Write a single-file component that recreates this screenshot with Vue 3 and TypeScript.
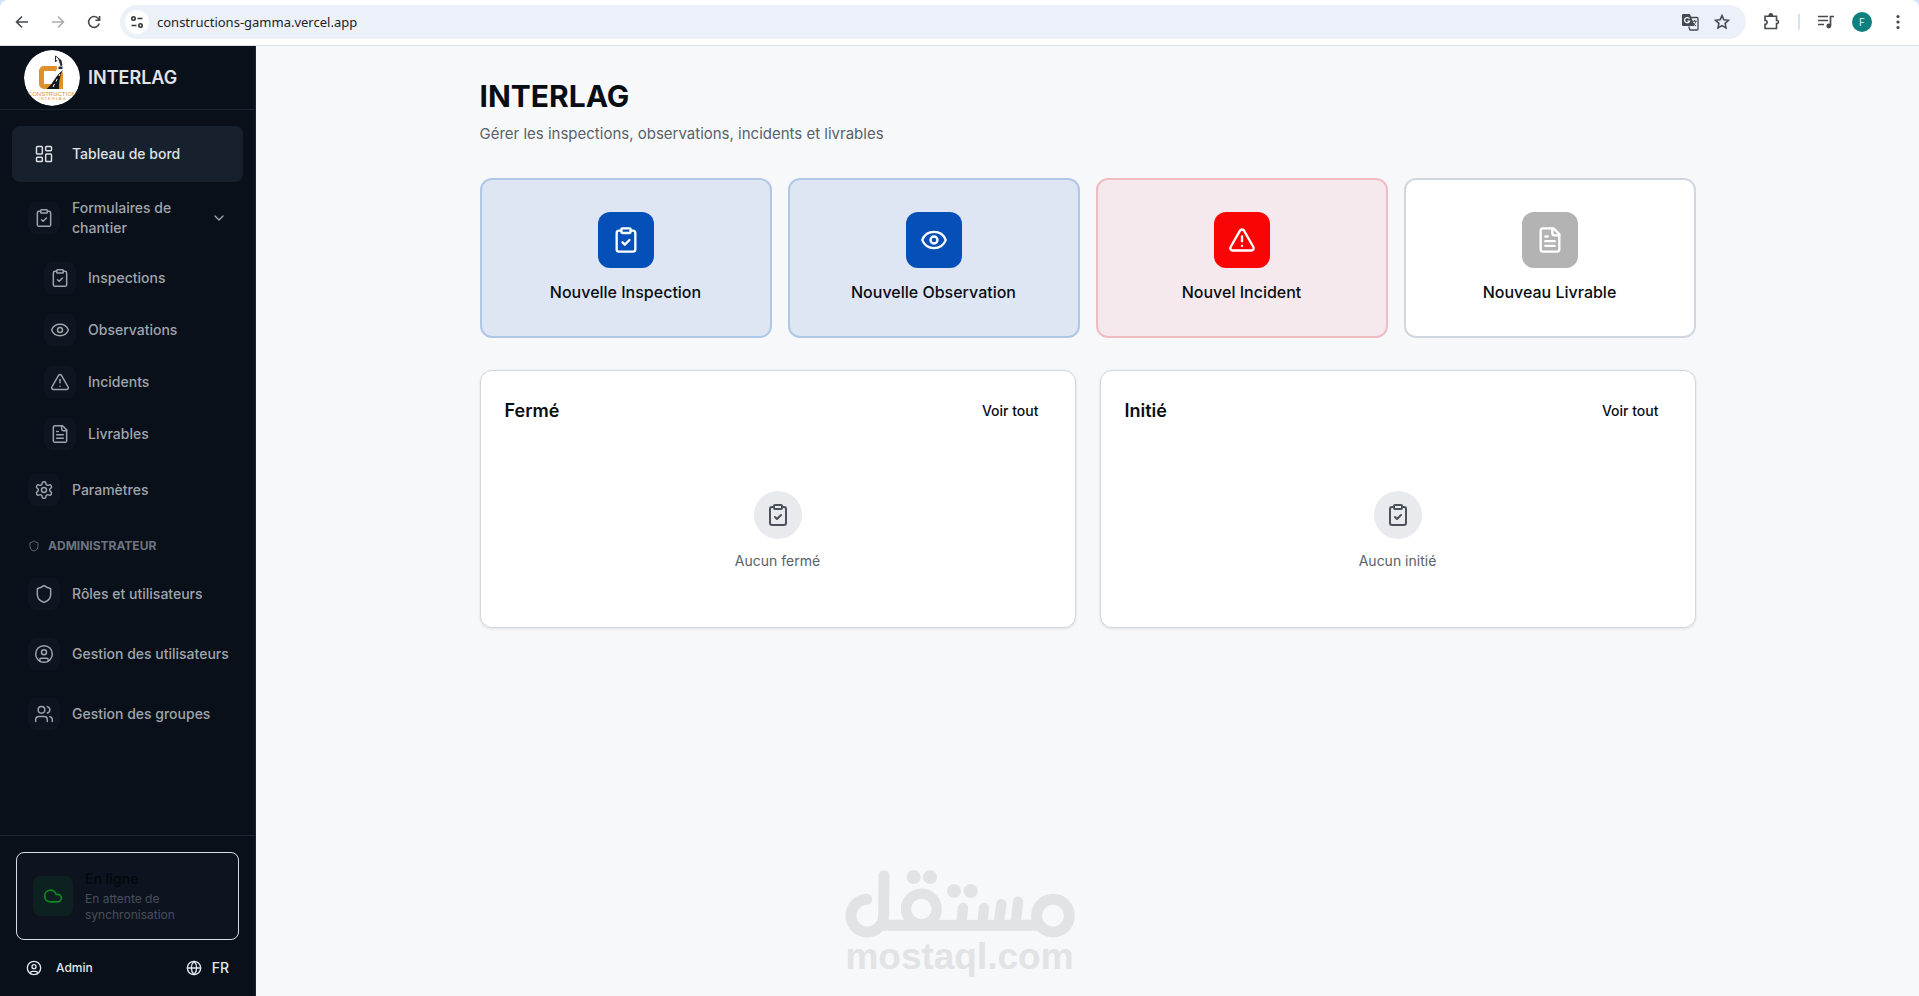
<script setup lang="ts">
import { ref } from 'vue'

type IconName =
  | 'dashboard' | 'clipboard' | 'eye' | 'alert' | 'file' | 'settings'
  | 'shield' | 'user' | 'users' | 'cloud' | 'globe' | 'chevron'

const icons: Record<IconName, string> = {
  dashboard:
    '<rect x="3" y="3" width="7" height="9" rx="1"/><rect x="14" y="3" width="7" height="5" rx="1"/><rect x="14" y="12" width="7" height="9" rx="1"/><rect x="3" y="16" width="7" height="5" rx="1"/>',
  clipboard:
    '<rect x="8" y="2" width="8" height="4" rx="1"/><path d="M16 4h2a2 2 0 0 1 2 2v14a2 2 0 0 1-2 2H6a2 2 0 0 1-2-2V6a2 2 0 0 1 2-2h2"/><path d="m9 14 2 2 4-4"/>',
  eye:
    '<path d="M2.062 12.348a1 1 0 0 1 0-.696 10.75 10.75 0 0 1 19.876 0 1 1 0 0 1 0 .696 10.75 10.75 0 0 1-19.876 0"/><circle cx="12" cy="12" r="3"/>',
  alert:
    '<path d="m21.73 18-8-14a2 2 0 0 0-3.48 0l-8 14A2 2 0 0 0 4 21h16a2 2 0 0 0 1.73-3"/><path d="M12 9v4"/><path d="M12 17h.01"/>',
  file:
    '<path d="M15 2H6a2 2 0 0 0-2 2v16a2 2 0 0 0 2 2h12a2 2 0 0 0 2-2V7Z"/><path d="M14 2v4a2 2 0 0 0 2 2h4"/><path d="M10 9H8"/><path d="M16 13H8"/><path d="M16 17H8"/>',
  settings:
    '<path d="M12.22 2h-.44a2 2 0 0 0-2 2v.18a2 2 0 0 1-1 1.73l-.43.25a2 2 0 0 1-2 0l-.15-.08a2 2 0 0 0-2.73.73l-.22.38a2 2 0 0 0 .73 2.73l.15.1a2 2 0 0 1 1 1.72v.51a2 2 0 0 1-1 1.74l-.15.09a2 2 0 0 0-.73 2.73l.22.38a2 2 0 0 0 2.73.73l.15-.08a2 2 0 0 1 2 0l.43.25a2 2 0 0 1 1 1.73V20a2 2 0 0 0 2 2h.44a2 2 0 0 0 2-2v-.18a2 2 0 0 1 1-1.73l.43-.25a2 2 0 0 1 2 0l.15.08a2 2 0 0 0 2.73-.73l.22-.39a2 2 0 0 0-.73-2.73l-.15-.08a2 2 0 0 1-1-1.74v-.5a2 2 0 0 1 1-1.74l.15-.09a2 2 0 0 0 .73-2.73l-.22-.38a2 2 0 0 0-2.73-.73l-.15.08a2 2 0 0 1-2 0l-.43-.25a2 2 0 0 1-1-1.73V4a2 2 0 0 0-2-2z"/><circle cx="12" cy="12" r="3"/>',
  shield:
    '<path d="M20 13c0 5-3.5 7.5-7.66 8.95a1 1 0 0 1-.67-.01C7.5 20.5 4 18 4 13V6a1 1 0 0 1 1-1c2 0 4.5-1.2 6.24-2.72a1.17 1.17 0 0 1 1.52 0C14.51 3.81 17 5 19 5a1 1 0 0 1 1 1z"/>',
  user:
    '<circle cx="12" cy="12" r="10"/><circle cx="12" cy="10" r="3"/><path d="M7 20.662V19a2 2 0 0 1 2-2h6a2 2 0 0 1 2 2v1.662"/>',
  users:
    '<path d="M16 21v-2a4 4 0 0 0-4-4H6a4 4 0 0 0-4 4v2"/><circle cx="9" cy="7" r="4"/><path d="M22 21v-2a4 4 0 0 0-3-3.87"/><path d="M16 3.13a4 4 0 0 1 0 7.75"/>',
  cloud: '<path d="M17.5 19H9a7 7 0 1 1 6.71-9h1.79a4.5 4.5 0 1 1 0 9Z"/>',
  globe:
    '<circle cx="12" cy="12" r="10"/><path d="M12 2a14.5 14.5 0 0 0 0 20 14.5 14.5 0 0 0 0-20"/><path d="M2 12h20"/>',
  chevron: '<path d="m6 9 6 6 6-6"/>',
}

interface NavEntry { label: string; icon: IconName }

const formEntries: NavEntry[] = [
  { label: 'Inspections', icon: 'clipboard' },
  { label: 'Observations', icon: 'eye' },
  { label: 'Incidents', icon: 'alert' },
  { label: 'Livrables', icon: 'file' },
]

const adminEntries: NavEntry[] = [
  { label: 'Rôles et utilisateurs', icon: 'shield' },
  { label: 'Gestion des utilisateurs', icon: 'user' },
  { label: 'Gestion des groupes', icon: 'users' },
]

const actions: { label: string; icon: IconName; tone: string }[] = [
  { label: 'Nouvelle Inspection', icon: 'clipboard', tone: 'blue' },
  { label: 'Nouvelle Observation', icon: 'eye', tone: 'blue' },
  { label: 'Nouvel Incident', icon: 'alert', tone: 'red' },
  { label: 'Nouveau Livrable', icon: 'file', tone: 'plain' },
]

const panels = [
  { title: 'Fermé', empty: 'Aucun fermé' },
  { title: 'Initié', empty: 'Aucun initié' },
]

const formsOpen = ref(true)
const address = ref('constructions-gamma.vercel.app')
</script>

<template>
  <div class="window">
    <header class="toolbar">
      <div class="nav-buttons">
        <button class="tool" type="button" aria-label="Précédent">
          <svg width="16" height="16" viewBox="0 0 16 16" class="line"><path d="M14 8H3M8 2.5 2.5 8 8 13.5" /></svg>
        </button>
        <button class="tool faded" type="button" aria-label="Suivant">
          <svg width="16" height="16" viewBox="0 0 16 16" class="line"><path d="M2 8h11M8 2.5 13.5 8 8 13.5" /></svg>
        </button>
        <button class="tool" type="button" aria-label="Actualiser">
          <svg width="16" height="16" viewBox="0 0 16 16" class="line"><path d="M13.2 9.5A5.4 5.4 0 1 1 12 4.3L13.4 5.8M13.6 2v4.2H9.4" /></svg>
        </button>
      </div>
      <div class="omnibox">
        <button class="site-info" type="button" aria-label="Informations sur le site">
          <svg width="14" height="14" viewBox="0 0 14 14" class="line"><circle cx="3.5" cy="3.5" r="1.7" /><path d="M7.5 3.5h5M1.5 10.5h5" /><circle cx="10.5" cy="10.5" r="1.7" /></svg>
        </button>
        <input v-model="address" class="address" type="text" aria-label="Adresse" />
        <button class="tool" type="button" aria-label="Traduire">
          <svg width="18" height="18" viewBox="0 0 18 18">
            <path d="M2 1h7l4.5 12H2a1 1 0 0 1-1-1V2a1 1 0 0 1 1-1z" fill="#454a50" />
            <path d="M9.7 4.5H16a1 1 0 0 1 1 1V16a1 1 0 0 1-1 1H9l-1.3-3.5" fill="none" stroke="#454a50" stroke-width="1.3" />
            <path d="M8.4 5.8A2.6 2.6 0 1 0 8.6 8H6.4" fill="none" stroke="#fff" stroke-width="1.2" />
            <path d="M11 8.2h4.8M13.4 7v1.2M14.8 8.2c-.4 2-1.6 3.6-3 4.6M12 9.8c.7 1.3 1.7 2.4 3 3.2" fill="none" stroke="#454a50" />
          </svg>
        </button>
        <button class="tool" type="button" aria-label="Ajouter aux favoris">
          <svg width="16" height="16" viewBox="0 0 16 16" class="line"><path d="m8 1.6 1.9 4.2 4.6.5-3.4 3.1.9 4.5L8 11.6l-4 2.3.9-4.5-3.400-3.100 4.600-.5z" /></svg>
        </button>
      </div>
      <div class="tools">
        <button class="tool" type="button" aria-label="Extensions">
          <svg width="18" height="18" viewBox="0 0 18 18" class="line"><path d="M2 3.200h11.500v4.200c2.600-.5 2.600 3.700 0 3.200v4.900H2v-4.200c2.800.2 2.800-4.200 0-4z" /><path d="M6.200 2.500a1.600 1.600 0 0 1 3.200 0z" fill="#454a50" /></svg>
        </button>
        <span class="separator"></span>
        <button class="tool" type="button" aria-label="Commandes multimédias">
          <svg width="18" height="16" viewBox="0 0 18 16"><path d="M1 2.500h10M1 6.500h10M1 10.500h6M13.500 12V2.500H17" fill="none" stroke="#454a50" stroke-width="1.700" /><circle cx="11.800" cy="12" r="2.400" fill="#454a50" /></svg>
        </button>
        <button class="profile" type="button" aria-label="Profil">F</button>
        <button class="tool" type="button" aria-label="Menu">
          <svg width="16" height="16" viewBox="0 0 16 16" fill="#454a50"><circle cx="8" cy="2.500" r="1.600" /><circle cx="8" cy="8" r="1.600" /><circle cx="8" cy="13.500" r="1.600" /></svg>
        </button>
      </div>
    </header>

    <div class="app">
      <aside class="sidebar">
        <div class="brand">
          <svg width="56" height="56" viewBox="0 0 56 56" role="img" aria-label="Construction Interlag">
            <defs><clipPath id="brand-disc"><circle cx="28" cy="28" r="28" /></clipPath></defs>
            <g clip-path="url(#brand-disc)">
              <circle cx="28" cy="28" r="28" fill="#fff" />
              <path d="M31 18.500H20a2.500 2.500 0 0 0-2.500 2.500v13a2.500 2.500 0 0 0 2.500 2.500h7" fill="none" stroke="#dd902b" stroke-width="5" />
              <path d="M31 16h1.500l1 2.500L31 22zM34 28l5-6v17h-5z" fill="#dd902b" />
              <path d="M22.500 39c4-3 6-7 9-11 2-3 4-5 7.500-8-2.500 5-4 9-4 19z" fill="#15181c" />
              <path d="M29 37l1.500-3M32 31.500l1.200-2.500M35 26l1-2" stroke="#fff" stroke-width="1" />
              <path d="M31.500 6v6l1.500-2M31.500 6l5.500 4.500.5 4.500" fill="none" stroke="#26303a" stroke-width="1" />
              <path d="M34 8l3 2 1.500 5-1 1h-1zM34.500 16.500h4v2.500h-4z" fill="#26303a" />
              <text x="28" y="46" text-anchor="middle" class="logo-line">CONSTRUCTION</text>
              <text x="28" y="50" text-anchor="middle" class="logo-sub">I N T E R L A G</text>
            </g>
          </svg>
          <span class="brand-name">INTERLAG</span>
        </div>

        <nav class="nav" aria-label="Navigation principale">
          <a class="item active" href="#tableau">
            <span class="chip"><svg class="icon" viewBox="0 0 24 24" v-html="icons.dashboard" /></span>
            <span>Tableau de bord</span>
          </a>
          <button class="item" type="button" :aria-expanded="formsOpen" @click="formsOpen = !formsOpen">
            <span class="chip"><svg class="icon" viewBox="0 0 24 24" v-html="icons.clipboard" /></span>
            <span class="grow">Formulaires de chantier</span>
            <svg class="icon small" viewBox="0 0 24 24" v-html="icons.chevron" />
          </button>
          <div v-if="formsOpen" class="subnav">
            <a v-for="entry in formEntries" :key="entry.label" class="item" href="#formulaires">
              <span class="chip"><svg class="icon" viewBox="0 0 24 24" v-html="icons[entry.icon]" /></span>
              <span>{{ entry.label }}</span>
            </a>
          </div>
          <a class="item" href="#parametres">
            <span class="chip"><svg class="icon" viewBox="0 0 24 24" v-html="icons.settings" /></span>
            <span>Paramètres</span>
          </a>
          <h2 class="section">
            <svg class="icon tiny" viewBox="0 0 24 24" v-html="icons.shield" />
            <span>ADMINISTRATEUR</span>
          </h2>
          <a v-for="entry in adminEntries" :key="entry.label" class="item" href="#admin">
            <span class="chip"><svg class="icon" viewBox="0 0 24 24" v-html="icons[entry.icon]" /></span>
            <span>{{ entry.label }}</span>
          </a>
        </nav>

        <div class="foot">
          <div class="status">
            <span class="status-icon"><svg class="icon cloud" viewBox="0 0 24 24" v-html="icons.cloud" /></span>
            <div>
              <p class="status-title">En ligne</p>
              <p class="status-text">En attente de synchronisation</p>
            </div>
          </div>
          <div class="account">
            <button class="account-button user" type="button">
              <svg class="icon small" viewBox="0 0 24 24" v-html="icons.user" />
              <span>Admin</span>
            </button>
            <button class="account-button lang" type="button">
              <svg class="icon small" viewBox="0 0 24 24" v-html="icons.globe" />
              <span>FR</span>
            </button>
          </div>
        </div>
      </aside>

      <main class="main">
        <div class="container">
          <h1>INTERLAG</h1>
          <p class="lead">Gérer les inspections, observations, incidents et livrables</p>

          <div class="actions">
            <button v-for="action in actions" :key="action.label" class="action" :class="action.tone" type="button">
              <span class="action-icon"><svg class="icon large" viewBox="0 0 24 24" v-html="icons[action.icon]" /></span>
              <span>{{ action.label }}</span>
            </button>
          </div>

          <div class="panels">
            <section v-for="panel in panels" :key="panel.title" class="panel">
              <div class="panel-head">
                <h2>{{ panel.title }}</h2>
                <button class="see-all" type="button">Voir tout</button>
              </div>
              <div class="empty">
                <span class="empty-icon"><svg class="icon medium" viewBox="0 0 24 24" v-html="icons.clipboard" /></span>
                <p>{{ panel.empty }}</p>
              </div>
            </section>
          </div>
        </div>
      </main>
    </div>

    <div class="watermark">
      <svg width="230" height="68" viewBox="72 60 690 204" fill="none" stroke="#e2e3e5" stroke-linecap="round" role="img" aria-label="مستقل">
        <path d="M137 148A49 49 0 1 0 188 197L189 77" stroke-width="33" />
        <path d="M186 226H655" stroke-width="33" stroke-linecap="butt" />
        <circle cx="301" cy="177" r="46" stroke-width="31" />
        <circle cx="696" cy="197" r="49" stroke-width="33" />
        <path d="M426 174 421 222M489 174 484 222M541 162 533 222M591 155 584 222" stroke-width="31" />
        <g fill="#e2e3e5" stroke="none">
          <circle cx="278" cy="81" r="21" /><circle cx="327" cy="81" r="21" />
          <circle cx="399" cy="123" r="21" /><circle cx="449" cy="123" r="21" />
        </g>
      </svg>
      <span>mostaql.com</span>
    </div>
  </div>
</template>

<style>
body {
  margin: 0;
  background: #f7f8fa;
}
</style>

<style scoped>
* {
  box-sizing: border-box;
}

.window {
  position: relative;
  display: flex;
  flex-direction: column;
  min-height: 100vh;
  background: #d3e3fd;
  font-family: Inter, "Liberation Sans", sans-serif;
  font-size: 14px;
  line-height: 20px;
  color: #090d14;
}

h1, h2, p {
  margin: 0;
}

button, input {
  font: inherit;
  color: inherit;
  padding: 0;
  border: 0;
  background: none;
}

a {
  color: inherit;
  text-decoration: none;
}

.icon {
  flex: none;
  width: 20px;
  height: 20px;
  fill: none;
  stroke: currentColor;
  stroke-width: 1.75;
  stroke-linecap: round;
  stroke-linejoin: round;
}
.icon.tiny { width: 12px; height: 12px; }
.icon.small { width: 16px; height: 16px; stroke-width: 2; }
.icon.cloud { stroke-width: 2; }
.icon.medium { width: 24px; height: 24px; stroke-width: 2; }
.icon.large { width: 28px; height: 28px; stroke-width: 2; }

/* Browser toolbar */
.toolbar {
  display: flex;
  align-items: center;
  height: 46px;
  padding: 0 11px 2px 12px;
  border-bottom: 1px solid #dfe1e4;
  border-radius: 8px 8px 0 0;
  background: #fff;
}
.nav-buttons {
  display: flex;
  gap: 16px;
  margin-right: 16px;
}
.tool {
  display: grid;
  place-items: center;
  width: 20px;
  height: 20px;
  color: #454a50;
}
.faded { color: #a9acb0; }
.line {
  fill: none;
  stroke: currentColor;
  stroke-width: 1.6;
}
.omnibox {
  display: flex;
  flex: 1;
  align-items: center;
  gap: 12px;
  height: 34px;
  padding: 0 14px 0 5px;
  border-radius: 17px;
  background: #ecf0f9;
}
.site-info {
  display: grid;
  place-items: center;
  width: 24px;
  height: 24px;
  border-radius: 50%;
  background: #fff;
  color: #30353b;
}
.address {
  flex: 1;
  margin-left: -4px;
  font-family: "Noto Sans", "Open Sans", sans-serif;
  font-size: 13px;
  color: #1f2226;
  outline: none;
}
.tools {
  display: flex;
  align-items: center;
  gap: 16px;
  margin-left: 16px;
}
.separator {
  width: 2px;
  height: 16px;
  background: #d5e4f2;
}
.profile {
  width: 20px;
  height: 20px;
  border-radius: 50%;
  background: #0f8080;
  color: #e3f3f3;
  font-size: 10px;
}

/* Sidebar */
.app {
  display: flex;
  flex: 1;
}
.sidebar {
  display: flex;
  flex-direction: column;
  flex: none;
  width: 256px;
  border-right: 1px solid #1d2733;
  background: #09101a;
  color: #a0a5ab;
  font-weight: 500;
}
.brand {
  display: flex;
  align-items: center;
  gap: 8px;
  height: 64px;
  padding: 0 24px;
  border-bottom: 1px solid #1d2733;
}
.logo-line {
  font: 400 6px "Liberation Sans", sans-serif;
  fill: #dd902b;
}
.logo-sub {
  font: 400 4px "Liberation Sans", sans-serif;
  fill: #dd902b;
}
.brand-name {
  color: #e1e5e9;
  font-size: 18px;
  font-weight: 600;
}
.nav {
  display: flex;
  flex: 1;
  flex-direction: column;
  gap: 4px;
  padding: 16px 12px;
}
.item {
  display: flex;
  align-items: center;
  gap: 12px;
  padding: 12px 16px;
  border-radius: 8px;
  text-align: left;
  white-space: nowrap;
}
.item.active {
  background: #17212d;
  color: #dfe2e5;
}
.chip {
  display: grid;
  flex: none;
  place-items: center;
  width: 32px;
  height: 32px;
  border-radius: 8px;
  background: #0e1520;
}
.active .chip { background: none; }
.grow {
  flex: 1;
  white-space: normal;
}
.subnav {
  display: flex;
  flex-direction: column;
  gap: 4px;
  padding-left: 16px;
}
.subnav .item {
  padding: 8px 16px;
}
.section {
  display: flex;
  align-items: center;
  gap: 8px;
  padding: 16px 16px 8px;
  color: #6d7480;
  font-size: 12px;
  font-weight: 700;
  line-height: 16px;
}
.foot {
  padding: 16px 16px 12px;
  border-top: 1px solid #1d2733;
}
.status {
  display: flex;
  align-items: center;
  gap: 12px;
  padding: 16px;
  border: 1px solid #d9dde2;
  border-radius: 8px;
  background: #0d1420;
}
.status-icon {
  display: grid;
  flex: none;
  place-items: center;
  width: 40px;
  height: 40px;
  border-radius: 8px;
  background: #0d2220;
  color: #0d8a20;
}
.status-title {
  color: #05080c;
  font-weight: 600;
}
.status-text {
  margin-top: 2px;
  color: #484e57;
  font-size: 12px;
  font-weight: 400;
  line-height: 16px;
}
.account {
  display: flex;
  justify-content: space-between;
  margin-top: 12px;
  color: #e4e7ea;
}
.account-button {
  display: flex;
  align-items: center;
  height: 32px;
  padding: 0 10px;
}
.user {
  gap: 14px;
  font-size: 12px;
}
.lang { gap: 10px; }

/* Dashboard */
.main {
  flex: 1;
  min-width: 0;
  background: #f7f8fa;
}
.container {
  max-width: 1280px;
  margin: 0 auto;
  padding: 32px;
}
h1 {
  font-size: 30px;
  font-weight: 700;
  line-height: 36px;
}
.lead {
  margin: 8px 0 32px;
  color: #59616a;
  font-size: 15px;
  line-height: 24px;
}
.actions {
  display: grid;
  grid-template-columns: repeat(4, 1fr);
  gap: 16px;
}
.action {
  display: flex;
  flex-direction: column;
  align-items: center;
  gap: 12px;
  padding: 32px;
  border: 2px solid #d1d7df;
  border-radius: 12px;
  background: #fff;
  font-size: 16px;
  font-weight: 500;
  line-height: 24px;
}
.action-icon {
  display: grid;
  place-items: center;
  width: 56px;
  height: 56px;
  border-radius: 12px;
  background: #b3b3b3;
  color: #fff;
}
.action.blue {
  border-color: #b0c7e7;
  background: #dfe6f3;
}
.blue .action-icon { background: #054fb9; }
.action.red {
  border-color: #f0bcc4;
  background: #f5e9ed;
}
.red .action-icon { background: #fa0505; }
.panels {
  display: grid;
  grid-template-columns: repeat(2, 1fr);
  gap: 24px;
  margin-top: 32px;
}
.panel {
  padding: 24px;
  border: 1px solid #d1d7df;
  border-radius: 12px;
  background: #fff;
  box-shadow: 0 1px 3px rgba(0, 0, 0, 0.1);
}
.panel-head {
  display: flex;
  align-items: center;
  justify-content: space-between;
}
.panel-head h2 {
  font-size: 18px;
  font-weight: 600;
}
.see-all {
  height: 32px;
  padding: 0 12px;
  font-weight: 500;
}
.empty {
  display: flex;
  flex-direction: column;
  align-items: center;
  gap: 12px;
  padding: 64px 0 32px;
  color: #59616a;
}
.empty-icon {
  display: grid;
  place-items: center;
  width: 48px;
  height: 48px;
  border-radius: 50%;
  background: #e9eaed;
  color: #4b505a;
}

.watermark {
  position: absolute;
  bottom: 20px;
  left: 0;
  right: 0;
  display: flex;
  flex-direction: column;
  align-items: center;
  color: #e2e3e5;
  font-family: "Liberation Sans", Arial, sans-serif;
  font-size: 37px;
  font-weight: 700;
  line-height: 38px;
  pointer-events: none;
}
</style>
